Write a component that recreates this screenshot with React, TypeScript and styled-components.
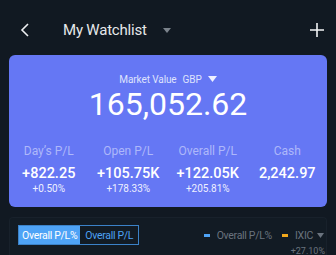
import React from "react";
import styled, { createGlobalStyle } from "styled-components";

const Global = createGlobalStyle`
  html, body { margin: 0; padding: 0; background: #111922; }
  body { font-family: Roboto, "Noto Sans", sans-serif; -webkit-font-smoothing: antialiased; }
  * { box-sizing: border-box; }
`;

const Page = styled.div`
  width: 336px;
  height: 255px;
  overflow: hidden;
  background: #111922;
  color: #fff;
`;

const Header = styled.div`
  height: 50px;
  margin-top: 5px;
  display: flex;
  align-items: center;
  padding: 0 12px 0 18px;
`;

const IconButton = styled.div`
  display: flex;
  align-items: center;
  justify-content: center;
  width: 14px;
  height: 16px;
`;

const TitleWrap = styled.div`
  display: flex;
  align-items: center;
  margin-left: 31px;
  flex: 1;
`;

const Title = styled.span`
  font-size: 15px;
  color: #e6e8ea;
  letter-spacing: -0.2px;
`;

const TitleCaret = styled.svg`
  margin-left: 16px;
  margin-top: 1px;
`;

const Card = styled.div`
  margin: 0 9px;
  height: 152px;
  border-radius: 6px;
  background: #6577f4;
  padding-top: 17px;
  display: flex;
  flex-direction: column;
  align-items: center;
`;

const ValueLabel = styled.div`
  display: flex;
  align-items: center;
  height: 14px;
  font-size: 10px;
  letter-spacing: -0.1px;
  color: #dfe3fd;
  gap: 6px;
`;

const BigNumber = styled.div`
  font-size: 32px;
  line-height: 36px;
  font-weight: 400;
  color: #fff;
`;

const Stats = styled.div`
  margin-top: 22px;
  width: 100%;
  display: grid;
  grid-template-columns: repeat(4, 1fr);
`;

const Stat = styled.div`
  display: flex;
  flex-direction: column;
  align-items: center;
`;

const StatLabel = styled.div`
  font-size: 12px;
  line-height: 14px;
  color: #aeb8fa;
`;

const StatValue = styled.div`
  margin-top: 7px;
  font-size: 14.5px;
  line-height: 17px;
  font-weight: 500;
  color: #fff;
`;

const StatPct = styled.div`
  margin-top: 1px;
  font-size: 10px;
  line-height: 12px;
  color: #eef0ff;
`;

const Panel = styled.div`
  margin: 10px 9px 0;
  height: 60px;
  border: 1px solid #18212b;
  border-bottom: none;
  border-radius: 4px 4px 0 0;
  background: #121b24;
  padding: 7px 0 0 8px;
`;

const PanelRow = styled.div`
  display: flex;
  align-items: center;
  justify-content: space-between;
  padding-right: 2px;
`;

const Toggle = styled.div`
  display: flex;
  height: 20px;
  border: 1px solid #3b82c8;
`;

const Segment = styled.div<{ $active?: boolean }>`
  display: flex;
  align-items: center;
  padding: 0 ${(p) => (p.$active ? "3px" : "5px")};
  font-size: 10.5px;
  letter-spacing: -0.3px;
  background: ${(p) => (p.$active ? "#4ea3f6" : "transparent")};
  color: ${(p) => (p.$active ? "#ffffff" : "#4da1f4")};
`;

const Legend = styled.div`
  display: flex;
  align-items: center;
  font-size: 10.5px;
  letter-spacing: -0.3px;
  color: #6a737e;
`;

const Swatch = styled.span<{ $color: string }>`
  width: 6px;
  height: 3px;
  background: ${(p) => p.$color};
  margin-right: 7px;
`;

const LegendItem = styled.div`
  display: flex;
  align-items: center;
  margin-left: 10px;
`;

const Axis = styled.div`
  text-align: right;
  font-size: 9px;
  line-height: 10px;
  color: #6a737e;
  margin-top: 1px;
  padding-right: 1px;
`;

const stats = [
  { label: "Day\u2019s P/L", value: "+822.25", pct: "+0.50%" },
  { label: "Open P/L", value: "+105.75K", pct: "+178.33%" },
  { label: "Overall P/L", value: "+122.05K", pct: "+205.81%" },
  { label: "Cash", value: "2,242.97", pct: "" },
];

export default function App() {
  return (
    <Page>
      <Global />
      <Header>
        <IconButton>
          <svg width="10" height="14" viewBox="0 0 10 14">
            <path d="M8 1 L2 7 L8 13" fill="none" stroke="#eef0f2" strokeWidth="1.6" />
          </svg>
        </IconButton>
        <TitleWrap>
          <Title>My Watchlist</Title>
          <TitleCaret width="8" height="5" viewBox="0 0 8 5">
            <path d="M0 0 H8 L4 5 Z" fill="#7b838c" />
          </TitleCaret>
        </TitleWrap>
        <IconButton>
          <svg width="14" height="14" viewBox="0 0 14 14">
            <path d="M7 0 V14 M0 7 H14" stroke="#f2f3f5" strokeWidth="1.6" />
          </svg>
        </IconButton>
      </Header>
      <Card>
        <ValueLabel>
          <span>Market Value</span>
          <span>GBP</span>
          <svg width="9" height="6" viewBox="0 0 9 6">
            <path d="M0 0 H9 L4.5 6 Z" fill="#eef0ff" />
          </svg>
        </ValueLabel>
        <BigNumber>165,052.62</BigNumber>
        <Stats>
          {stats.map((s) => (
            <Stat key={s.label}>
              <StatLabel>{s.label}</StatLabel>
              <StatValue>{s.value}</StatValue>
              {s.pct && <StatPct>{s.pct}</StatPct>}
            </Stat>
          ))}
        </Stats>
      </Card>
      <Panel>
        <PanelRow>
          <Toggle>
            <Segment $active>Overall P/L%</Segment>
            <Segment>Overall P/L</Segment>
          </Toggle>
          <Legend>
            <LegendItem>
              <Swatch $color="#4ea3f6" />
              Overall P/L%
            </LegendItem>
            <LegendItem>
              <Swatch $color="#f1a81c" />
              IXIC
              <svg width="7" height="5" viewBox="0 0 7 5" style={{ marginLeft: 4 }}>
                <path d="M0 0 H7 L3.5 5 Z" fill="#6a737e" />
              </svg>
            </LegendItem>
          </Legend>
        </PanelRow>
        <Axis>+27.10%</Axis>
      </Panel>
    </Page>
  );
}
